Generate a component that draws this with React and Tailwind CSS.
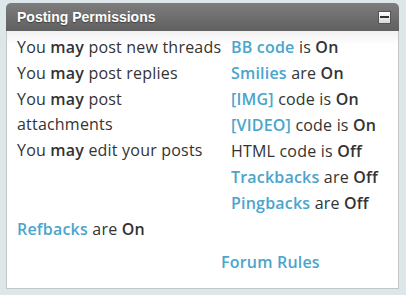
export default function App() {
  const left = [
    ["post new threads"],
    ["post replies"],
    ["post attachments"],
    ["edit your posts"],
  ];
  const right = [
    ["BB code", "is", "On"],
    ["Smilies", "are", "On"],
    ["[IMG]", "code is", "On"],
    ["[VIDEO]", "code is", "On"],
    [null, "HTML code is", "Off"],
    ["Trackbacks", "are", "Off"],
    ["Pingbacks", "are", "Off"],
  ];

  return (
    <div className="min-h-[295px] bg-[#dde6e9] pl-[6px] pr-[7px] pt-[3px] pb-[5px]">
      <div className="flex h-[28px] items-center justify-between rounded-t-[5px] bg-gradient-to-b from-[#7d7d7d] to-[#606060] pl-[11px] pr-[8px]">
        <h2 className="font-['Liberation_Sans',Arial,sans-serif] text-[14px] font-bold text-white [text-shadow:0_1px_1px_rgba(0,0,0,0.4)]">
          Posting Permissions
        </h2>
        <div className="flex h-[13px] w-[13px] items-center justify-center border border-[#555] bg-gradient-to-b from-white to-[#d8d8d8]">
          <div className="h-[2px] w-[9px] bg-[#333]" />
        </div>
      </div>
      <div className="h-[258px] border border-t-0 border-[#c2c6c6] bg-gradient-to-b from-[#f1f1f1] to-white to-[14px] pl-[10px] pt-[4px] font-['Open_Sans',sans-serif] text-[16px] leading-[25px] tracking-[0.2px] text-[#333]">
        <div className="flex">
          <ul className="w-[214px] pr-[14px]">
            {left.map(([t], i) => (
              <li key={i} className={i === 0 ? "mb-px whitespace-nowrap" : "mb-px"}>
                You <b className="font-semibold">may</b> {t}
              </li>
            ))}
          </ul>
          <ul>
            {right.map(([link, mid, state], i) => (
              <li key={i} className="mb-px">
                {link && (
                  <a className="font-semibold text-[#4aa5cc]" href="#">
                    {link}
                  </a>
                )}
                {link ? " " : ""}
                {mid} <b className="font-semibold">{state}</b>
              </li>
            ))}
          </ul>
        </div>
        <div className="mb-px">
          <a className="font-semibold text-[#4aa5cc]" href="#">
            Refbacks
          </a>{" "}
          are <b className="font-semibold">On</b>
        </div>
        <div className="mt-[8px] pl-[204px]">
          <a className="font-semibold text-[#4aa5cc]" href="#">
            Forum Rules
          </a>
        </div>
      </div>
    </div>
  );
}
